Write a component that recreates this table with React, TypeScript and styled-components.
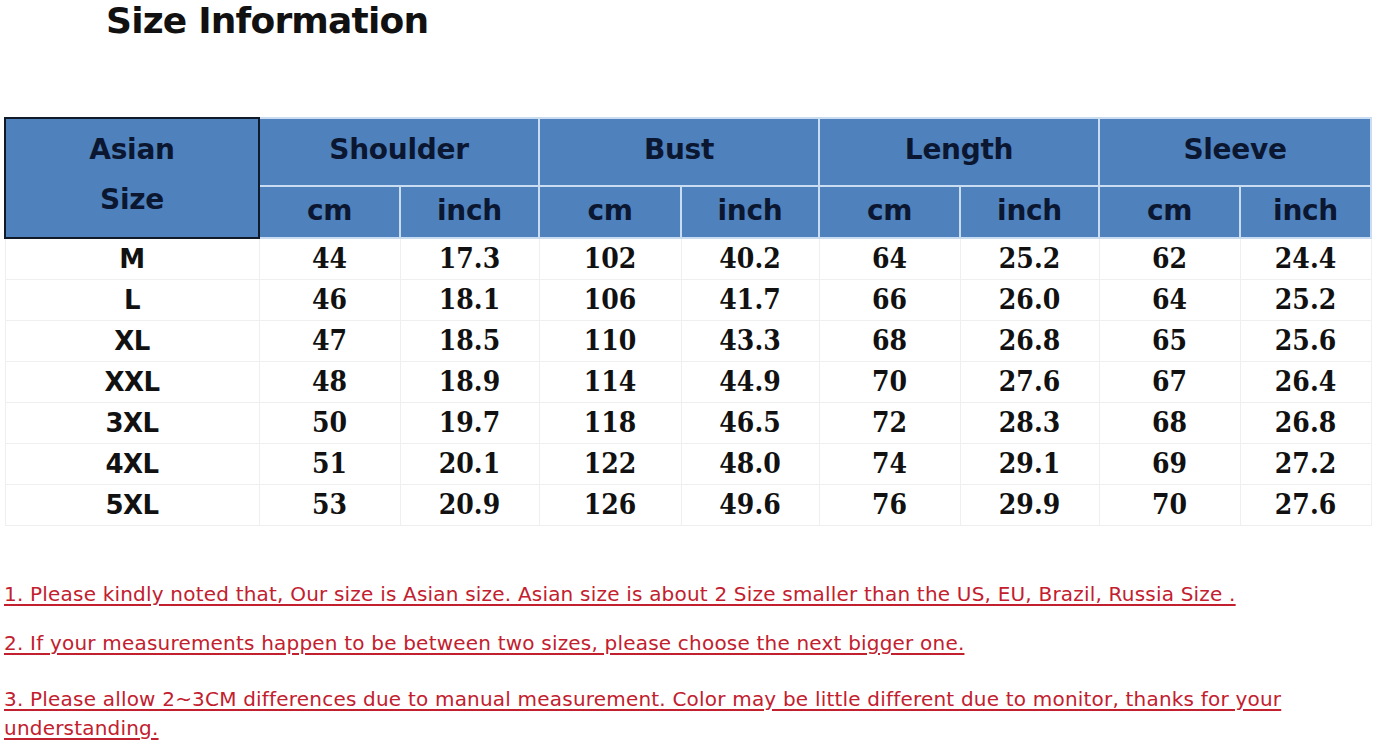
import React from 'react';
import styled, { createGlobalStyle } from 'styled-components';

const GlobalStyle = createGlobalStyle`
  html, body {
    margin: 0;
    padding: 0;
    background: #ffffff;
  }
`;

const Page = styled.div`
  width: 1374px;
  height: 745px;
  overflow: hidden;
  display: flex;
  flex-direction: column;

  & > * {
    flex-shrink: 0;
  }
`;

const Title = styled.h1`
  margin: 0;
  padding: 0 0 0 106px;
  height: 117px;
  font-family: 'DejaVu Sans', Verdana, sans-serif;
  font-weight: bold;
  font-size: 36px;
  line-height: 42px;
  color: #111111;
  letter-spacing: -0.8px;
`;

const Table = styled.table`
  margin-left: 4px;
  border-collapse: collapse;
  table-layout: fixed;
  width: 1366px;
`;

const HeadCell = styled.th<{ $tall?: boolean }>`
  background: #4f81bd;
  color: #0b1730;
  font-family: 'DejaVu Sans', Verdana, sans-serif;
  font-weight: bold;
  font-size: 28px;
  letter-spacing: -0.3px;
  height: ${(p) => (p.$tall ? 61 : 47)}px;
  padding: 0 0 ${(p) => (p.$tall ? 5 : 3)}px;
  border: 2px solid #c9dcf2;
  text-align: center;
  vertical-align: middle;
`;

const CornerCell = styled.th`
  background: #4f81bd;
  color: #0b1730;
  font-family: 'DejaVu Sans', Verdana, sans-serif;
  font-weight: bold;
  font-size: 28px;
  letter-spacing: -0.3px;
  line-height: 50px;
  padding: 0 0 6px;
  border: 2px solid #111a28;
  text-align: center;
`;

const Row = styled.tr`
  height: 41px;
`;

const SizeCell = styled.td`
  font-family: 'DejaVu Sans', Verdana, sans-serif;
  font-weight: bold;
  font-size: 26px;
  letter-spacing: -0.5px;
  color: #111111;
  text-align: center;
  padding: 0;
  border: 1px solid #efefef;
`;

const NumCell = styled.td`
  font-family: 'DejaVu Serif Condensed', 'DejaVu Serif', serif;
  font-weight: bold;
  font-size: 28px;
  color: #111111;
  text-align: center;
  padding: 0;
  border: 1px solid #efefef;
`;

const Notes = styled.div`
  margin-top: 54px;
  padding-left: 4px;
  display: flex;
  flex-direction: column;
  gap: 20px;
`;

const Note = styled.p<{ $gapAbove?: number }>`
  margin: ${(p) => p.$gapAbove ?? 0}px 0 0;
  font-family: 'DejaVu Sans', Verdana, sans-serif;
  font-size: 20px;
  line-height: 29px;
  letter-spacing: 0.2px;
  color: #c2202e;
  text-decoration: underline;
  text-underline-offset: 3px;
  max-width: 1300px;
`;

const groups = ['Shoulder', 'Bust', 'Length', 'Sleeve'];
const widths = [254, 141, 139, 142, 138, 141, 139, 141, 131];

const rows: [string, ...string[]][] = [
  ['M', '44', '17.3', '102', '40.2', '64', '25.2', '62', '24.4'],
  ['L', '46', '18.1', '106', '41.7', '66', '26.0', '64', '25.2'],
  ['XL', '47', '18.5', '110', '43.3', '68', '26.8', '65', '25.6'],
  ['XXL', '48', '18.9', '114', '44.9', '70', '27.6', '67', '26.4'],
  ['3XL', '50', '19.7', '118', '46.5', '72', '28.3', '68', '26.8'],
  ['4XL', '51', '20.1', '122', '48.0', '74', '29.1', '69', '27.2'],
  ['5XL', '53', '20.9', '126', '49.6', '76', '29.9', '70', '27.6'],
];

const notes = [
  '1. Please kindly noted that, Our size is Asian size. Asian size is about 2 Size smaller than the US, EU, Brazil, Russia Size .',
  '2. If your measurements happen to be between two sizes, please choose the next bigger one.',
  '3. Please allow 2~3CM differences due to manual measurement. Color may be little different due to monitor, thanks for your understanding.',
];

export default function App() {
  return (
    <Page>
      <GlobalStyle />
      <Title>Size Information</Title>
      <Table>
        <colgroup>
          {widths.map((w, i) => (
            <col key={i} style={{ width: w }} />
          ))}
        </colgroup>
        <thead>
          <tr>
            <CornerCell rowSpan={2}>
              Asian
              <br />
              Size
            </CornerCell>
            {groups.map((g) => (
              <HeadCell key={g} colSpan={2} $tall>
                {g}
              </HeadCell>
            ))}
          </tr>
          <tr>
            {groups.map((g) => (
              <React.Fragment key={g}>
                <HeadCell>cm</HeadCell>
                <HeadCell>inch</HeadCell>
              </React.Fragment>
            ))}
          </tr>
        </thead>
        <tbody>
          {rows.map(([size, ...vals]) => (
            <Row key={size}>
              <SizeCell>{size}</SizeCell>
              {vals.map((v, i) => (
                <NumCell key={i}>{v}</NumCell>
              ))}
            </Row>
          ))}
        </tbody>
      </Table>
      <Notes>
        {notes.map((n, i) => (
          <Note key={n} $gapAbove={i === 2 ? 7 : 0}>
            {n}
          </Note>
        ))}
      </Notes>
    </Page>
  );
}
